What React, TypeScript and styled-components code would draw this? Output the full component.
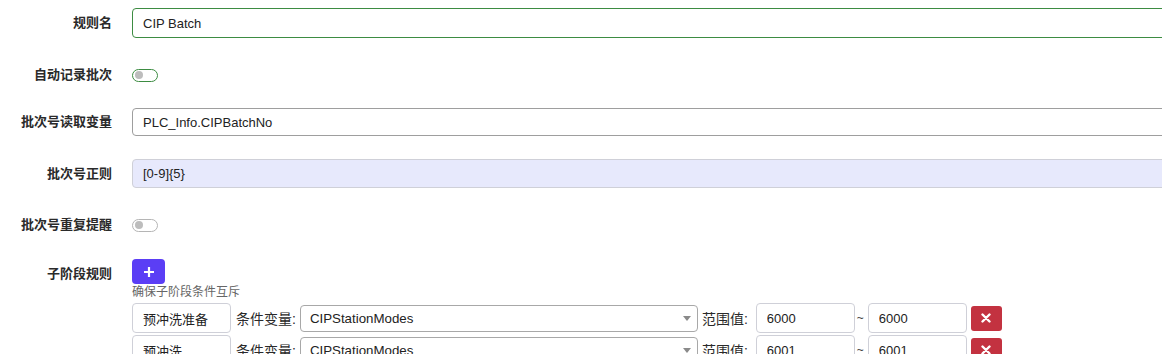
import React from "react";
import styled, { createGlobalStyle } from "styled-components";

const Global = createGlobalStyle`
  html, body {
    margin: 0;
    padding: 0;
    background: #ffffff;
    overflow: hidden;
  }
  body {
    font-family: "Liberation Sans", "Noto Sans CJK SC", sans-serif;
    color: #222;
  }
`;

const Form = styled.div`
  width: 1240px;
  display: flex;
  flex-direction: column;
`;

const Row = styled.div<{ $mt: number; $h?: number; $top?: boolean }>`
  display: grid;
  grid-template-columns: 112px 1fr;
  column-gap: 20px;
  align-items: ${(p) => (p.$top ? "start" : "center")};
  margin-top: ${(p) => p.$mt}px;
  height: ${(p) => (p.$h ? `${p.$h}px` : "auto")};
`;

const Label = styled.label<{ $pt?: number }>`
  text-align: right;
  font-size: 13px;
  line-height: 16px;
  font-weight: 700;
  color: #2a2a2a;
  white-space: nowrap;
  padding-top: ${(p) => p.$pt ?? 0}px;
`;

type Variant = "focus" | "dark" | "filled";

const TextInput = styled.input<{ $variant: Variant; $h: number }>`
  box-sizing: border-box;
  width: 100%;
  height: ${(p) => p.$h}px;
  padding: 0 10px;
  font-family: inherit;
  font-size: 13px;
  color: #222;
  border-radius: 4px;
  outline: none;
  border: 1px solid
    ${(p) =>
      p.$variant === "focus" ? "#3d8c42" : p.$variant === "dark" ? "#9e9e9e" : "#cfd0d8"};
  background: ${(p) => (p.$variant === "filled" ? "#e7e9fc" : "#ffffff")};
`;

const Toggle = styled.span<{ $accent: boolean }>`
  position: relative;
  display: block;
  box-sizing: border-box;
  width: 26px;
  height: 13px;
  border-radius: 7px;
  border: 1px solid ${(p) => (p.$accent ? "#3d8c42" : "#b5b5b5")};
  background: #fff;
  &::after {
    content: "";
    position: absolute;
    left: 2px;
    top: 1.5px;
    width: 8px;
    height: 8px;
    border-radius: 50%;
    background: #bdbdbd;
  }
`;

const Stack = styled.div`
  display: flex;
  flex-direction: column;
  align-items: flex-start;
`;

const AddButton = styled.button`
  box-sizing: border-box;
  width: 33px;
  height: 25px;
  border: none;
  border-radius: 4px;
  background: #5b3ef5;
  color: #fff;
  display: flex;
  align-items: center;
  justify-content: center;
  padding: 0;
`;

const Hint = styled.div`
  margin-top: 1px;
  font-size: 12px;
  line-height: 15px;
  color: #666666;
`;

const SubRows = styled.div`
  margin-top: 3px;
  display: flex;
  flex-direction: column;
  gap: 2px;
`;

const SubRow = styled.div`
  display: flex;
  align-items: center;
`;

const SmallInput = styled.input`
  box-sizing: border-box;
  width: 99px;
  height: 30px;
  padding: 0 10px;
  font-family: inherit;
  font-size: 13px;
  color: #222;
  border: 1px solid #cfd0d8;
  border-radius: 4px;
  outline: none;
  background: #fff;
`;

const InlineLabel = styled.span<{ $ml: number; $mr: number }>`
  font-size: 14px;
  color: #2a2a2a;
  white-space: nowrap;
  margin-left: ${(p) => p.$ml}px;
  margin-right: ${(p) => p.$mr}px;
`;

const SelectWrap = styled.div`
  position: relative;
  width: 398px;
  height: 27px;
`;

const Select = styled.select`
  box-sizing: border-box;
  width: 100%;
  height: 100%;
  appearance: none;
  -webkit-appearance: none;
  padding: 0 24px 0 9px;
  font-family: inherit;
  font-size: 13.3px;
  color: #222;
  background: #fff;
  border: 1px solid #a8a8a8;
  border-radius: 4px;
  outline: none;
`;

const Caret = styled.svg`
  position: absolute;
  right: 7px;
  top: 11px;
  pointer-events: none;
`;

const Tilde = styled.span`
  font-size: 12px;
  color: #444;
  margin: 0 4px 0 2px;
`;

const DeleteButton = styled.button`
  box-sizing: border-box;
  width: 31px;
  height: 25px;
  margin-left: 4px;
  border: none;
  border-radius: 3px;
  background: #c33240;
  display: flex;
  align-items: center;
  justify-content: center;
  padding: 0;
`;

interface Stage {
  name: string;
  variable: string;
  from: string;
  to: string;
}

const stages: Stage[] = [
  { name: "预冲洗准备", variable: "CIPStationModes", from: "6000", to: "6000" },
  { name: "预冲洗", variable: "CIPStationModes", from: "6001", to: "6001" },
];

const StageRow: React.FC<{ stage: Stage }> = ({ stage }) => (
  <SubRow>
    <SmallInput defaultValue={stage.name} />
    <InlineLabel $ml={5} $mr={4}>条件变量:</InlineLabel>
    <SelectWrap>
      <Select defaultValue={stage.variable}>
        <option value="CIPStationModes">CIPStationModes</option>
      </Select>
      <Caret width="8" height="5" viewBox="0 0 8 5">
        <path d="M0 0 L8 0 L4 5 Z" fill="#8a8a8a" />
      </Caret>
    </SelectWrap>
    <InlineLabel $ml={4} $mr={8}>范围值:</InlineLabel>
    <SmallInput defaultValue={stage.from} />
    <Tilde>~</Tilde>
    <SmallInput defaultValue={stage.to} />
    <DeleteButton aria-label="删除">
      <svg width="10" height="10" viewBox="0 0 10 10">
        <path d="M1.5 1.5 L8.5 8.5 M8.5 1.5 L1.5 8.5" stroke="#fff" strokeWidth="2.4" strokeLinecap="round" />
      </svg>
    </DeleteButton>
  </SubRow>
);

export default function App() {
  return (
    <>
      <Global />
      <Form>
        <Row $mt={8} $h={30}>
          <Label>规则名</Label>
          <TextInput $variant="focus" $h={30} defaultValue="CIP Batch" />
        </Row>
        <Row $mt={22} $h={30}>
          <Label>自动记录批次</Label>
          <Toggle $accent />
        </Row>
        <Row $mt={18} $h={28}>
          <Label>批次号读取变量</Label>
          <TextInput $variant="dark" $h={28} defaultValue="PLC_Info.CIPBatchNo" />
        </Row>
        <Row $mt={23} $h={29}>
          <Label>批次号正则</Label>
          <TextInput $variant="filled" $h={29} defaultValue="[0-9]{5}" />
        </Row>
        <Row $mt={22} $h={30}>
          <Label>批次号重复提醒</Label>
          <Toggle $accent={false} />
        </Row>
        <Row $mt={19} $top>
          <Label $pt={7}>子阶段规则</Label>
          <Stack>
            <AddButton aria-label="添加">
              <svg width="12" height="12" viewBox="0 0 12 12">
                <path d="M6 1 V11 M1 6 H11" stroke="#fff" strokeWidth="2.2" />
              </svg>
            </AddButton>
            <Hint>确保子阶段条件互斥</Hint>
            <SubRows>
              {stages.map((s) => (
                <StageRow key={s.name} stage={s} />
              ))}
            </SubRows>
          </Stack>
        </Row>
      </Form>
    </>
  );
}
